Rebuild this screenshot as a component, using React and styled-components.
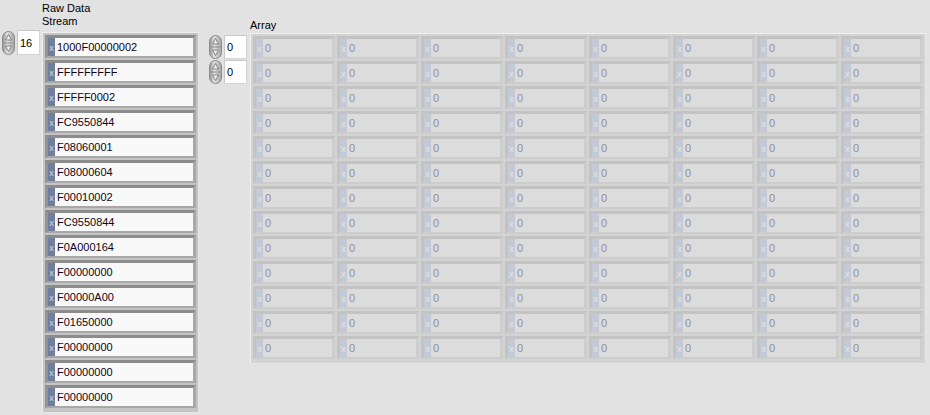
import React from "react";
import styled, { createGlobalStyle } from "styled-components";

const GlobalStyle = createGlobalStyle`
  html, body {
    margin: 0;
    padding: 0;
    background: #e2e2e2;
  }
  body {
    font-family: "Liberation Sans", Arial, sans-serif;
    font-size: 11px;
    color: #000;
  }
`;

const rawData = [
  "1000F00000002",
  "FFFFFFFFF",
  "FFFFF0002",
  "FC9550844",
  "F08060001",
  "F08000604",
  "F00010002",
  "FC9550844",
  "F0A000164",
  "F00000000",
  "F00000A00",
  "F01650000",
  "F00000000",
  "F00000000",
  "F00000000",
];

const Panel = styled.div`
  width: 930px;
  height: 415px;
  display: flex;
  align-items: flex-start;
  overflow: hidden;
`;

const ArrayGroup = styled.div`
  display: grid;
  grid-template-columns: 40px auto;
  grid-template-rows: ${(p) => p.$labelHeight}px auto;
  margin-left: ${(p) => p.$offset}px;
  column-gap: ${(p) => p.$gap}px;
`;

const Label = styled.div`
  grid-column: 2;
  grid-row: 1;
  display: flex;
  flex-direction: column;
  justify-content: ${(p) => (p.$bottom ? "flex-end" : "flex-start")};
  padding-top: ${(p) => (p.$bottom ? 0 : 2)}px;
  padding-bottom: ${(p) => (p.$bottom ? 1 : 0)}px;
  line-height: 13px;
  white-space: nowrap;
`;

const IndexStack = styled.div`
  grid-column: 1;
  grid-row: 2;
  display: flex;
  flex-direction: column;
  gap: 1px;
  margin-top: ${(p) => p.$shift}px;
`;

const IndexControl = styled.div`
  display: flex;
  align-items: center;
  height: ${(p) => p.$h}px;
  gap: 2px;
`;

const IndexBox = styled.div`
  width: 23px;
  height: 100%;
  box-sizing: border-box;
  background: #ffffff;
  border: 1px solid #d4d4d4;
  border-top-color: #c8c8c8;
  border-left-color: #c8c8c8;
  padding-left: 2px;
  display: flex;
  align-items: center;
  font-size: 11px;
`;

const Frame = styled.div`
  grid-column: 2;
  grid-row: 2;
  display: grid;
  grid-template-columns: repeat(${(p) => p.$cols}, ${(p) => p.$cellW}px);
  row-gap: 2px;
  column-gap: 2px;
  padding: 2px 2px 4px 2px;
  background: ${(p) => (p.$disabled ? "#d3d3d3" : "#c4c4c4")};
  border: 1px solid #efefef;
  border-right-color: #e6e6e6;
  border-bottom-color: #e6e6e6;
`;

const Cell = styled.div`
  display: flex;
  height: 18px;
  border-style: solid;
  border-width: 3px 3px 2px 3px;
  border-color: ${(p) =>
    p.$disabled
      ? "#c3c3c3 #cdcdcd #cdcdcd #c3c3c3"
      : "#8c8c8c #a8a8a8 #a8a8a8 #939393"};
  background: ${(p) => (p.$disabled ? "#dcdcdc" : "#f9f9f9")};
`;

const Radix = styled.span`
  width: 7px;
  flex: none;
  background: ${(p) => (p.$disabled ? "#c3cad5" : "#6f7e9c")};
  color: ${(p) => (p.$disabled ? "#e6e6e6" : "#d2d9e6")};
  font-size: 9px;
  line-height: 9px;
  display: flex;
  align-items: flex-end;
  justify-content: center;
  padding-bottom: 3px;
  box-sizing: border-box;
`;

const Value = styled.span`
  padding-left: 2px;
  display: flex;
  align-items: center;
  font-size: 11px;
  color: ${(p) => (p.$disabled ? "#8f8e9c" : "#0e0418")};
  white-space: nowrap;
  overflow: hidden;
`;

const Spinner = () => (
  <svg width="13" height="24" viewBox="0 0 13 24">
    <defs>
      <linearGradient id="spinG" x1="0" y1="0" x2="1" y2="0">
        <stop offset="0" stopColor="#8e8e8e" />
        <stop offset="0.4" stopColor="#e2e2e2" />
        <stop offset="1" stopColor="#a2a2a2" />
      </linearGradient>
    </defs>
    <rect x="0.5" y="0.5" width="12" height="23" rx="6" fill="url(#spinG)" stroke="#8a8a8a" />
    <polygon points="6.5,3.5 3.5,9 9.5,9" fill="#ececec" stroke="#6e6e6e" strokeWidth="0.8" />
    <line x1="2" y1="12" x2="11" y2="12" stroke="#8c8c8c" strokeWidth="1" />
    <polygon points="3.5,15 9.5,15 6.5,20.5" fill="#ececec" stroke="#6e6e6e" strokeWidth="0.8" />
  </svg>
);

const Index = ({ value, h }) => (
  <IndexControl $h={h}>
    <Spinner />
    <IndexBox>{value}</IndexBox>
  </IndexControl>
);

export default function App() {
  const grid = Array.from({ length: 13 * 8 });
  return (
    <>
      <GlobalStyle />
      <Panel>
        <ArrayGroup $labelHeight={32} $offset={2} $gap={0}>
          <Label>
            <span>Raw Data</span>
            <span>Stream</span>
          </Label>
          <IndexStack $shift={-2}>
            <Index value="16" h={25} />
          </IndexStack>
          <Frame $cols={1} $cellW={151}>
            {rawData.map((v, i) => (
              <Cell key={i}>
                <Radix>x</Radix>
                <Value>{v}</Value>
              </Cell>
            ))}
          </Frame>
        </ArrayGroup>

        <ArrayGroup $labelHeight={33} $offset={10} $gap={1}>
          <Label $bottom>
            <span>Array</span>
          </Label>
          <IndexStack $shift={2}>
            <Index value="0" h={24} />
            <Index value="0" h={24} />
          </IndexStack>
          <Frame $cols={8} $cellW={82} $disabled>
            {grid.map((_, i) => (
              <Cell key={i} $disabled>
                <Radix $disabled>x</Radix>
                <Value $disabled>0</Value>
              </Cell>
            ))}
          </Frame>
        </ArrayGroup>
      </Panel>
    </>
  );
}
